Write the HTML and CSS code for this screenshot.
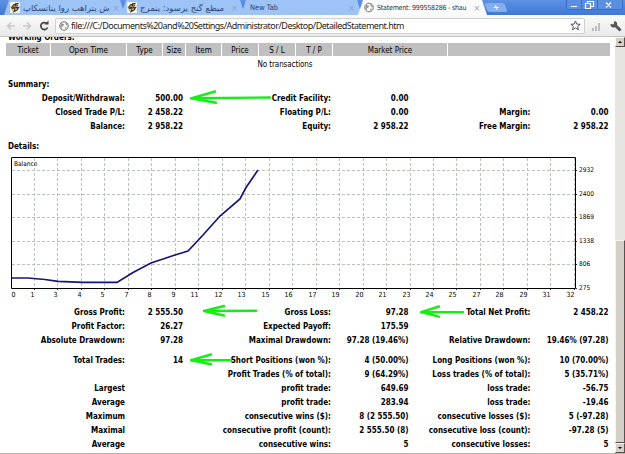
FILE: index.html
```html
<!DOCTYPE html>
<html lang="en">
<head>
    <meta charset="UTF-8">
    <title>Statement: 999558286</title>
    <link rel="stylesheet" href="styles.css">
</head>
<body>
    <svg width="0" height="0" class="defs">
        <symbol id="favicon" viewBox="0 0 10 11">
            <rect width="10" height="11" fill="#f4f1e6"/>
            <path d="M8.5 1.5L4 2.5 2 5l3-.5 3-1M1.5 7l3-1 4-.5L7 8 4 9.5 5 7M6 1L5 4.5" fill="none" stroke="#38352b" stroke-width="1.3"/>
            <path d="M3 4l3 1M2 8.5l2-.5" stroke="#c49b45"/>
        </symbol>
        <symbol id="globe" viewBox="0 0 10 10">
            <circle cx="5" cy="5" r="4.3" fill="#f7f7f7" stroke="#777"/>
            <path d="M2 2.2L5 3 4.4 5 2.8 5.8 3 8 1.2 6zM6 1l2 1.5L9 5 7 4zM6 6l2 .5L6.5 8.5z" fill="#999"/>
        </symbol>
    </svg>

    <div class="tabs">
        <div class="tab tab1">
            <svg class="fav"><use href="#favicon"/></svg>
            <span class="tab-title urdu">پاکستانی اور بھارتی ش</span>
            <span class="x">×</span>
        </div>
        <div class="tab tab2">
            <svg class="fav"><use href="#favicon"/></svg>
            <span class="tab-title urdu">جرمنی :دوسری جنگ عظیم</span>
            <span class="x">×</span>
        </div>
        <div class="tab tab3">
            <span class="tab-title">New Tab</span>
            <span class="x">×</span>
        </div>
        <div class="tab tab4">
            <svg class="fav"><use href="#globe"/></svg>
            <span class="tab-title">Statement: 999558286 - shau</span>
            <span class="x">×</span>
        </div>
        <div class="new-tab">+</div>
        <svg class="win-buttons" width="57" height="10" viewBox="0 0 57 10">
            <path d="M.5 0V7.5Q.5 9.5 2.5 9.5H54.5Q56.5 9.5 56.5 7.5V0M15.5 0V9M31.5 0V9" fill="#5b8fe0" stroke="#3a6dc4"/>
            <path d="M5 6.5H11M19.5 3.5H24.5V8.5H19.5ZM21.5 3V1.5H27.5V6.5H25M40 2.5L45 7.5M45 2.5L40 7.5" fill="none" stroke="#fff" stroke-width="1.2"/>
        </svg>
    </div>

    <div class="toolbar">
        <svg width="50" height="20" viewBox="0 0 50 20">
            <path d="M15 10H8M11 6.5L7.500 10L11 13.5M23 10H30M27 6.5L30.5 10L27 13.5" fill="none" stroke="#c9c9c9" stroke-width="1.6"/>
            <path d="M46.5 7.3A3.5 3.5 0 1 0 47.5 11.5" fill="none" stroke="#444" stroke-width="1.7"/>
            <path d="M44.5 8.5H48.5V4.5Z" fill="#444"/>
        </svg>
        <div class="address">
            <svg class="globe"><use href="#globe"/></svg>
            <span class="url">file:///C:/Documents%20and%20Settings/Administrator/Desktop/DetailedStatement.htm</span>
            <svg class="star" width="11" height="11" viewBox="0 0 11 11"><path d="M5.5 1L6.8 4.1 10.2 4.3 7.6 6.5 8.5 9.8 5.5 8 2.5 9.8 3.4 6.5.8 4.3 4.2 4.1Z" fill="#fff" stroke="#50506e"/></svg>
        </div>
        <svg class="tools" width="36" height="14" viewBox="0 0 36 14">
            <path d="M5 12V9M8 12V7M11 12V4" stroke="#bdbdbd" stroke-width="2"/>
            <path d="M26 5L32.5 11.5" stroke="#555" stroke-width="3"/>
            <path d="M26.5 2A3.3 3.3 0 1 1 22.5 5L25.5 5.5Z" fill="#555"/>
        </svg>
    </div>

    <div class="view">
        <div class="page">
            <div class="title cut">Working Orders:</div>
            <div class="orders">
                <div>Ticket</div><div>Open Time</div><div>Type</div><div>Size</div><div>Item</div><div>Price</div><div>S / L</div><div>T / P</div><div>Market Price</div><div></div>
            </div>
            <div class="none">No transactions</div>

            <div class="title summary">Summary:</div>
            <div class="stats">
                <b>Deposit/Withdrawal:</b><b>500.00</b><b>Credit Facility:</b><b>0.00</b><b></b><b></b>
                <b>Closed Trade P/L:</b><b>2 458.22</b><b>Floating P/L:</b><b>0.00</b><b>Margin:</b><b>0.00</b>
                <b>Balance:</b><b>2 958.22</b><b>Equity:</b><b>2 958.22</b><b>Free Margin:</b><b>2 958.22</b>
            </div>

            <div class="title details">Details:</div>
            <svg class="chart" width="606" height="147" viewBox="0 154 606 147">
                <g id="grid" class="grid"></g>
                <path class="frame" d="M11.5 157.5H575.5V288.5H11.5Z"/>
                <polyline class="line" points="12,278 28,278 45,279.5 58,281.3 83,282.4 117,282.4 133,272.5 151,263 175,255 188,251 203,235 220,216 240,199 246,187.5 258,170"/>
                <text x="14" y="166">Balance</text>
                <g id="labels"></g>
            </svg>

            <div class="stats">
                <b>Gross Profit:</b><b>2 555.50</b><b>Gross Loss:</b><b>97.28</b><b>Total Net Profit:</b><b>2 458.22</b>
                <b>Profit Factor:</b><b>26.27</b><b>Expected Payoff:</b><b>175.59</b><b></b><b></b>
                <b>Absolute Drawdown:</b><b>97.28</b><b>Maximal Drawdown:</b><b>97.28 (19.46%)</b><b>Relative Drawdown:</b><b>19.46% (97.28)</b>
            </div>
            <div class="stats trades">
                <b>Total Trades:</b><b>14</b><b>Short Positions (won %):</b><b>4 (50.00%)</b><b>Long Positions (won %):</b><b>10 (70.00%)</b>
                <b></b><b></b><b>Profit Trades (% of total):</b><b>9 (64.29%)</b><b>Loss trades (% of total):</b><b>5 (35.71%)</b>
                <b>Largest</b><b></b><b>profit trade:</b><b>649.69</b><b>loss trade:</b><b>-56.75</b>
                <b>Average</b><b></b><b>profit trade:</b><b>283.94</b><b>loss trade:</b><b>-19.46</b>
                <b>Maximum</b><b></b><b>consecutive wins ($):</b><b>8 (2 555.50)</b><b>consecutive losses ($):</b><b>5 (-97.28)</b>
                <b>Maximal</b><b></b><b>consecutive profit (count):</b><b>2 555.50 (8)</b><b>consecutive loss (count):</b><b>-97.28 (5)</b>
                <b>Average</b><b></b><b>consecutive wins:</b><b>5</b><b>consecutive losses:</b><b>5</b>
            </div>
        </div>
        <div class="scrollbar">
            <div class="sb-button"><i class="up"></i></div>
            <div class="sb-track"></div>
            <div class="sb-thumb"></div>
            <div class="sb-button"><i class="down"></i></div>
        </div>
    </div>

    <svg class="arrows" width="625" height="454" viewBox="0 0 625 454">
        <path d="M270 97.500L191 98.300M215 91.5L191 98.3L216 102.7"/>
        <path d="M256 310.7L204 311M224 306L204 311L224 315.5"/>
        <path d="M231 360.2H191M211 354.5L191 360.2L211 364.3"/>
        <path d="M463 312.2H421M439 306.5L421 312.2L439 316.7"/>
    </svg>

    <script>
        const xs = [1, 3, 4, 5, 7, 8, 9, 11, 12, 13, 15, 16, 17, 19, 20, 21, 23, 24, 25, 27, 28, 29, 31, 32];
        const ys = [2932, 2400, 1869, 1338, 806, 275];
        let grid = '';
        let labels = '<text class="end" x="15.5" y="296.5">0</text>';

        xs.forEach((n, i) => {
            const x = Math.round(34 + i * 23.47) + 0.5;
            grid += `<path d="M${x} 158V288"/>`;
            labels += `<path d="M${x} 289v1"/><text class="end" x="${x}" y="296.5">${n}</text>`;
        });
        ys.forEach((n, i) => {
            const y = Math.round(170 + i * 23.5) + 0.5;
            if (i < 5) grid += `<path d="M12 ${y}H575"/>`;
            labels += `<path d="M576 ${Math.min(y, 288.5)}h1"/><text x="579" y="${y + 1.5}">${n}</text>`;
        });
        document.getElementById('grid').innerHTML = grid;
        document.getElementById('labels').innerHTML = labels;
    </script>
</body>
</html>
```

FILE: styles.css
```css
body {
    margin: 0;
    width: 625px;
    height: 454px;
    overflow: hidden;
    display: flex;
    flex-direction: column;
    background: #fff;
    color: #000;
    font-family: "DejaVu Sans Condensed", "DejaVu Sans", sans-serif;
    font-size: 8px;
}

.defs {
    position: absolute;
}

.tabs {
    display: flex;
    height: 15px;
    flex: none;
    padding-left: 4px;
    background: linear-gradient(#5d92e4, #3f77d3);
}

.tab {
    display: flex;
    align-items: center;
    box-sizing: border-box;
    height: 15px;
    padding: 0 7px 0 6px;
    margin-right: -4px;
    background: #9dc3f7;
    color: #2d4870;
    clip-path: polygon(5px 0, calc(100% - 5px) 0, 100% 100%, 0 100%);
    font-size: 7.5px;
    white-space: nowrap;
}

.tab1 { width: 121px; }
.tab2 { width: 124px; }
.tab3 { width: 121px; }

.tab4 {
    width: 129px;
    background: #fbfbfb;
    color: #333;
    font-size: 7px;
    letter-spacing: -0.2px;
}

.tab3 .tab-title {
    margin-left: 3px;
}

.fav {
    width: 10px;
    height: 11px;
    margin-right: 3px;
    flex: none;
}

.tab-title {
    flex: 1;
    line-height: 14px;
}

.urdu {
    direction: ltr;
    unicode-bidi: bidi-override;
    font-family: "DejaVu Sans", sans-serif;
    font-size: 8.5px;
}

.x {
    margin-left: 3px;
    color: #8fa4c2;
    font-size: 9px;
}

.new-tab {
    width: 20px;
    height: 9px;
    margin: 3px 0 0 3px;
    border-radius: 2px;
    background: #85aeed;
    color: #fff;
    font-weight: bold;
    line-height: 9px;
    text-align: center;
    transform: skewX(20deg);
}

.win-buttons {
    margin-left: auto;
    margin-right: 2px;
}

.toolbar {
    display: flex;
    align-items: center;
    box-sizing: border-box;
    height: 22px;
    flex: none;
    background: linear-gradient(#fbfbfb, #e9e9e9);
    border-bottom: 1px solid #c4c4c4;
}

.address {
    display: flex;
    align-items: center;
    box-sizing: border-box;
    width: 530px;
    height: 16px;
    margin-left: 5px;
    padding: 0 3px;
    background: #fff;
    border: 1px solid #d0d0d0;
    border-radius: 2px;
}

.globe {
    width: 10px;
    height: 10px;
}

.url {
    margin-left: 2px;
    color: #222;
    font-family: "Noto Sans", sans-serif;
    font-size: 9px;
    letter-spacing: -0.5px;
}

.star {
    margin-left: auto;
}

.tools {
    margin-left: 3px;
}

.view {
    display: flex;
    height: 416px;
    overflow: hidden;
    border-bottom: 1px solid #b5b2aa;
}

.page {
    width: 615px;
}

.title {
    height: 14px;
    line-height: 14px;
    padding-left: 8px;
    font-weight: bold;
}

.cut {
    height: 6px;
    line-height: 1px;
}

.orders {
    display: grid;
    grid-template-columns: 44px 75px 35px 22px 35px 36px 36px 36px 114px 1fr;
    column-gap: 1px;
    height: 13px;
    margin: 0 5px 0 6px;
    line-height: 15px;
    text-align: center;
}

.orders div {
    height: 13px;
    background: #c0c0c0;
}

.none {
    height: 22px;
    padding-right: 45px;
    line-height: 18px;
    text-align: center;
    letter-spacing: -0.1px;
}

.stats {
    display: grid;
    grid-template-columns: 125px 58px 148px 77.5px 122px 78px;
    grid-auto-rows: 14px;
    line-height: 14px;
    text-align: right;
    white-space: nowrap;
}

.trades {
    margin-top: 6px;
}

.details {
    margin-top: 6px;
}

.chart {
    display: block;
    margin-bottom: 5px;
}

.chart text {
    font-family: "DejaVu Sans Condensed", sans-serif;
    font-size: 6.5px;
}

.chart .end {
    text-anchor: end;
    font-size: 7px;
}

.grid path {
    stroke: #bbc2bb;
    stroke-dasharray: 3 2;
}

.frame {
    fill: none;
    stroke: #000;
}

#labels path {
    stroke: #333;
}

.line {
    fill: none;
    stroke: #14147c;
    stroke-width: 1.7;
}

.scrollbar {
    display: flex;
    flex-direction: column;
    width: 10px;
    background: #e6e5e0;
}

.sb-button, .sb-thumb {
    box-sizing: border-box;
    background: #d4d0c8;
    border: 1px solid;
    border-color: #f5f4f0 #55524e #55524e #f5f4f0;
}

.sb-button {
    display: flex;
    justify-content: center;
    align-items: center;
    height: 10px;
}

.up, .down {
    border: 2.5px solid transparent;
}

.up {
    border-bottom-color: #000;
    margin-top: -3px;
}

.down {
    border-top-color: #000;
    margin-top: 2px;
}

.sb-track {
    height: 193px;
}

.sb-thumb {
    flex: 1;
}

.arrows {
    position: absolute;
    left: 0;
    top: 0;
    pointer-events: none;
}

.arrows path {
    fill: none;
    stroke: #14ee14;
    stroke-width: 2.4;
    stroke-linecap: round;
    stroke-linejoin: round;
}
```
